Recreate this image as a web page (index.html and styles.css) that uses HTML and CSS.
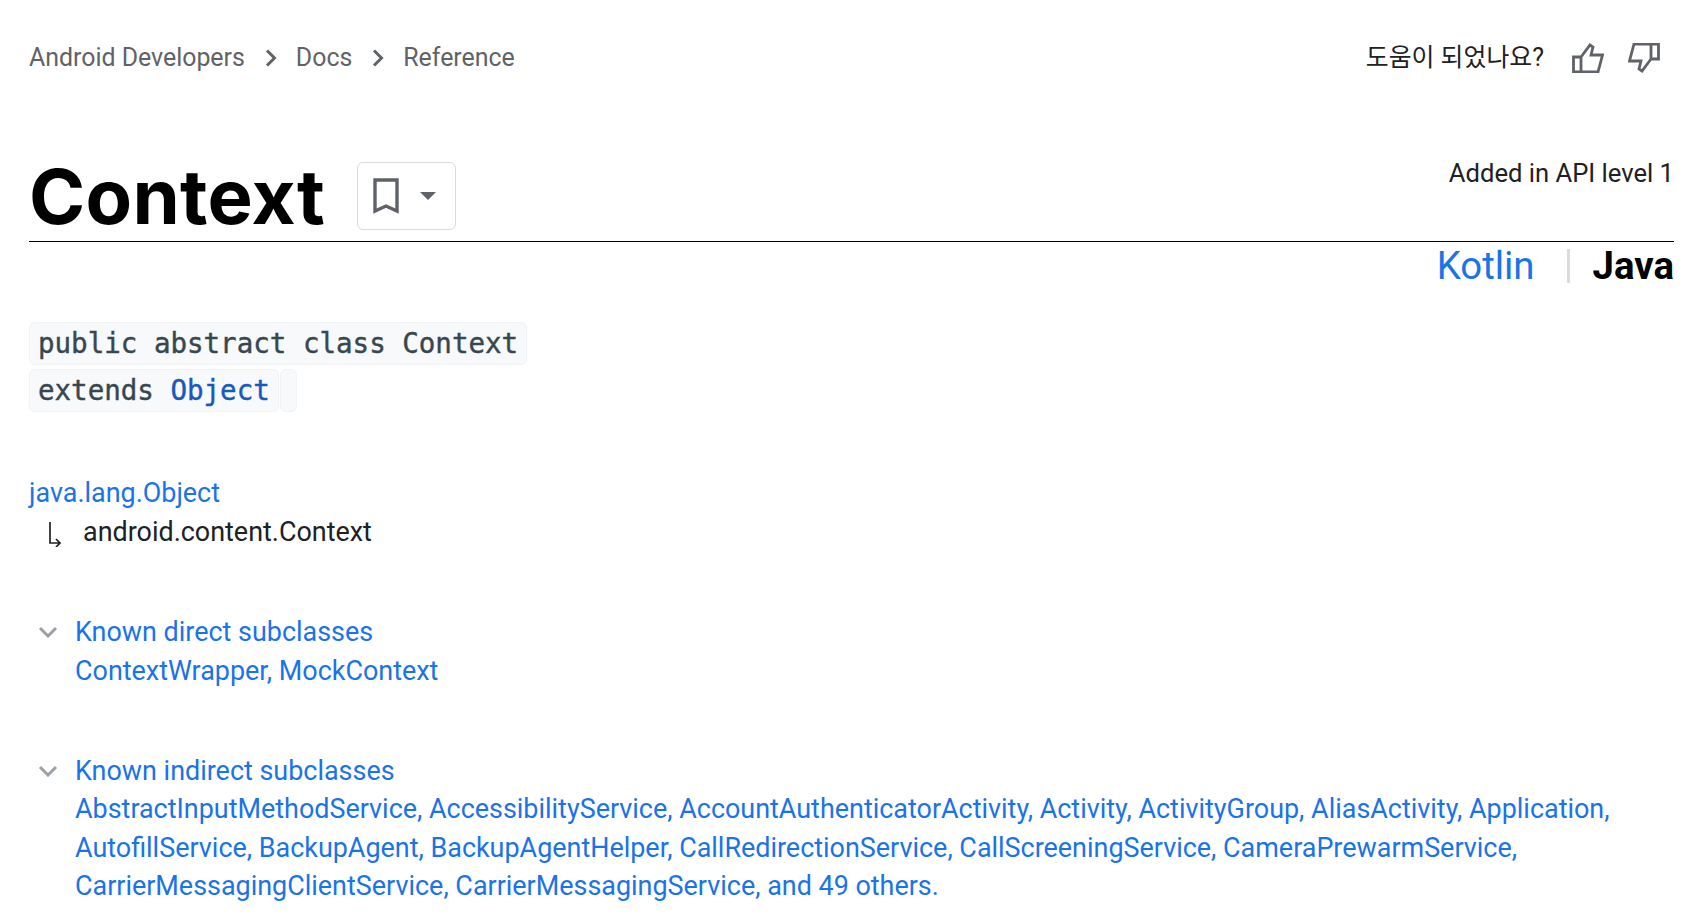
FILE: index.html
```html
<!DOCTYPE html>
<html lang="en">
<head>
  <meta charset="UTF-8">
  <meta name="viewport" content="width=device-width, initial-scale=1.0">
  <title>Context | Android Developers</title>
  <link rel="stylesheet" href="styles.css">
</head>
<body>
  <!-- Breadcrumb + feedback -->
  <div class="top-row">
    <nav class="breadcrumb">
      <a href="#">Android Developers</a>
      <svg class="crumb-icon" viewBox="0 0 24 24"><path d="M7 4.500l7.500 7.500L7 19.500"/></svg>
      <a href="#">Docs</a>
      <svg class="crumb-icon" viewBox="0 0 24 24"><path d="M7 4.500l7.500 7.500L7 19.500"/></svg>
      <a href="#">Reference</a>
    </nav>
    <div class="feedback">
      <span class="feedback-label">도움이 되었나요?</span>
      <svg class="thumb" viewBox="0 0 32 30"><path d="M9 14v15H1.500V14zM9 14l9-12 3 2-2 8h11.500L26 29H9"/></svg>
      <svg class="thumb thumb-down" viewBox="0 0 32 30"><path d="M9 14v15H1.500V14zM9 14l9-12 3 2-2 8h11.500L26 29H9"/></svg>
    </div>
  </div>

  <!-- Title -->
  <header class="title-row">
    <h1>Context</h1>
    <button class="bookmark">
      <svg class="bookmark-icon" viewBox="0 0 28 36"><path d="M3 2h22v31l-11-5-11 5z"/></svg>
      <span class="caret"></span>
    </button>
    <span class="api-level">Added in API level 1</span>
  </header>

  <div class="lang-switch">
    <a href="#">Kotlin</a>
    <span class="lang-sep"></span>
    <b>Java</b>
  </div>

  <!-- Signature -->
  <div class="signature">
    <div><code>public abstract class Context</code></div>
    <div class="sig-row"><code>extends <a href="#">Object</a></code><code class="sig-empty"></code></div>
  </div>

  <!-- Hierarchy -->
  <div class="hierarchy">
    <div><a href="#">java.lang.Object</a></div>
    <div class="hier-child">
      <svg class="hier-arrow" viewBox="0 0 16 26"><path d="M3 1v21h10M9 18l4 4-4 4"/></svg>
      <span>android.content.Context</span>
    </div>
  </div>

  <section class="subclasses">
    <svg class="toggle" viewBox="0 0 20 12"><path d="M2 2l8 8 8-8"/></svg>
    <div class="sub-body">
      <a href="#">Known direct subclasses</a>
      <div><a href="#">ContextWrapper</a><a href="#">, MockContext</a></div>
    </div>
  </section>

  <section class="subclasses indirect">
    <svg class="toggle" viewBox="0 0 20 12"><path d="M2 2l8 8 8-8"/></svg>
    <div class="sub-body">
      <a href="#">Known indirect subclasses</a>
      <div>
        <a href="#">AbstractInputMethodService</a>, <a href="#">AccessibilityService</a>, <a href="#">AccountAuthenticatorActivity</a>, <a href="#">Activity</a>, <a href="#">ActivityGroup</a>, <a href="#">AliasActivity</a>, <a href="#">Application</a>,
        <a href="#">AutofillService</a>, <a href="#">BackupAgent</a>, <a href="#">BackupAgentHelper</a>, <a href="#">CallRedirectionService</a>, <a href="#">CallScreeningService</a>, <a href="#">CameraPrewarmService</a>,
        <a href="#">CarrierMessagingClientService</a>, <a href="#">CarrierMessagingService</a>, and 49 others.
      </div>
    </div>
  </section>
</body>
</html>
```

FILE: styles.css
```css
body {
  margin: 0;
  padding: 0 33px 0 29px;
  background: #fff;
  color: #202124;
  font-family: Roboto, "Noto Sans CJK KR", sans-serif;
  font-size: 26.930px;
  line-height: 38.400px;
}

a {
  color: #1a73e8;
  text-decoration: none;
}

.top-row {
  display: flex;
  justify-content: space-between;
  align-items: center;
  padding-top: 39px;
  font-size: 24.900px;
}

.breadcrumb {
  display: flex;
  align-items: center;
}

.breadcrumb a {
  color: #5f6368;
}

.crumb-icon {
  width: 24px;
  height: 24px;
  margin: 0 12px 0 15px;
  fill: none;
  stroke: #5f6368;
  stroke-width: 3;
}

.feedback {
  display: flex;
  align-items: center;
  margin-right: 14px;
}

.feedback-label {
  margin-right: 28px;
}

.thumb {
  width: 32px;
  height: 30px;
  fill: none;
  stroke: #5f6368;
  stroke-width: 2.800;
}

.thumb-down {
  margin-left: 24px;
  transform: rotate(180deg);
}

.title-row {
  display: flex;
  align-items: center;
  height: 92px;
  margin-top: 73px;
  border-bottom: 1px solid #000;
  box-sizing: border-box;
}

h1 {
  margin: 0;
  color: #000;
  font-family: Inter, sans-serif;
  font-size: 76px;
  font-weight: 700;
  line-height: 84px;
  letter-spacing: 0.300px;
}

.bookmark {
  display: flex;
  align-items: center;
  width: 99px;
  height: 68px;
  margin-left: 32px;
  padding: 0 0 0 14px;
  background: #fff;
  border: 1px solid #dadce0;
  border-radius: 6px;
}

.bookmark-icon {
  width: 28px;
  height: 36px;
  fill: none;
  stroke: #5f6368;
  stroke-width: 3.400;
}

.caret {
  margin-left: 20px;
  border-top: 8px solid #5f6368;
  border-left: 8px solid transparent;
  border-right: 8px solid transparent;
}

.api-level {
  margin-left: auto;
  margin-bottom: 46px;
  font-size: 25.600px;
}

.lang-switch {
  display: flex;
  justify-content: flex-end;
  align-items: center;
  font-size: 38.400px;
  line-height: 48px;
}

.lang-switch b {
  color: #000;
  font-weight: 700;
}

.lang-sep {
  width: 3px;
  height: 34px;
  margin: 0 23px 0 32px;
  background: #dadce0;
}

.signature {
  margin-top: 32px;
}

.signature code {
  display: inline-block;
  height: 43px;
  padding: 0 8px;
  background: #f8f9fa;
  border: 1px solid #f1f3f4;
  border-radius: 6px;
  box-sizing: border-box;
  color: #37474f;
  font-family: "DejaVu Sans Mono", monospace;
  font-size: 27.500px;
  line-height: 41px;
  -webkit-text-stroke: 0.400px;
}

.signature code a {
  color: #185abc;
}

.sig-row {
  display: flex;
  margin-top: 4px;
}

.signature .sig-empty {
  width: 17px;
  margin-left: 1px;
  padding: 0;
}

.hierarchy {
  margin-top: 62px;
}

.hier-child {
  display: flex;
  align-items: center;
}

.hier-arrow {
  width: 16px;
  height: 26px;
  margin: 4px 13px 0 18px;
  fill: none;
  stroke: #202124;
  stroke-width: 1.700;
}

.hier-child span {
  margin-left: 7px;
}

.subclasses {
  display: flex;
  margin-top: 62px;
}

.indirect {
  margin-top: 62px;
}

.toggle {
  flex-shrink: 0;
  width: 20px;
  height: 12px;
  margin: 13px 0 0 9px;
  fill: none;
  stroke: #9aa0a6;
  stroke-width: 3;
}

.sub-body {
  margin-left: 17px;
  color: #1a73e8;
}
```
